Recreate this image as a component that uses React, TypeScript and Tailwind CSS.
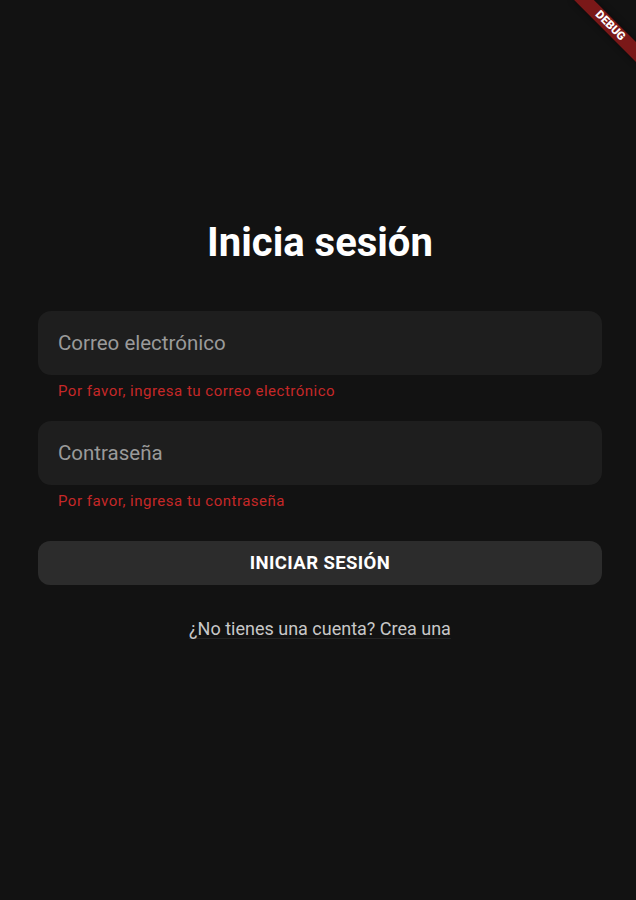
import React, { useState } from 'react';

function DebugBanner() {
  return (
    <div className="pointer-events-none absolute left-[566px] top-[19px] flex h-[14px] w-[88px] rotate-45 items-center justify-center bg-[#b71c1c]/[0.63] shadow-[0_0_6px_rgba(0,0,0,0.5)]">
      <span className="text-[11.5px] font-black leading-none text-white">DEBUG</span>
    </div>
  );
}

interface FieldProps {
  placeholder: string;
  error: string;
  type?: string;
}

function Field({ placeholder, error, type = 'text' }: FieldProps) {
  const [value, setValue] = useState('');
  return (
    <div className="flex flex-col">
      <input
        type={type}
        value={value}
        onChange={(e) => setValue(e.target.value)}
        placeholder={placeholder}
        className="h-[64px] w-full rounded-[13px] bg-[#1e1e1e] px-[20px] text-[20.5px] text-white outline-none placeholder:text-[#9a9a9a]"
      />
      <p className="mt-[6px] pl-[20px] text-[15px] leading-[20px] tracking-[0.5px] text-[#c62828]">{error}</p>
    </div>
  );
}

export default function App() {
  return (
    <div className="relative h-[900px] w-full overflow-hidden bg-[#121212] font-['Roboto',sans-serif]">
      <DebugBanner />
      <div className="flex flex-col pl-[38px] pr-[34px] pt-[223px]">
        <h1 className="text-center text-[40px] font-bold leading-[40px] text-white">Inicia sesión</h1>

        <div className="mt-[48px] flex flex-col gap-[20px]">
          <Field placeholder="Correo electrónico" error="Por favor, ingresa tu correo electrónico" />
          <Field placeholder="Contraseña" error="Por favor, ingresa tu contraseña" type="password" />
        </div>

        <button className="mt-[30px] h-[44px] w-full rounded-[12px] bg-[#2c2c2c] pt-[2px] text-[18.5px] font-bold tracking-[0.4px] text-white">
          INICIAR SESIÓN
        </button>

        <button className="mx-auto mt-[33px] text-[18px] leading-[22px] text-[#c8c8c8] underline decoration-[#242424] underline-offset-[3px]">
          ¿No tienes una cuenta? Crea una
        </button>
      </div>
    </div>
  );
}
